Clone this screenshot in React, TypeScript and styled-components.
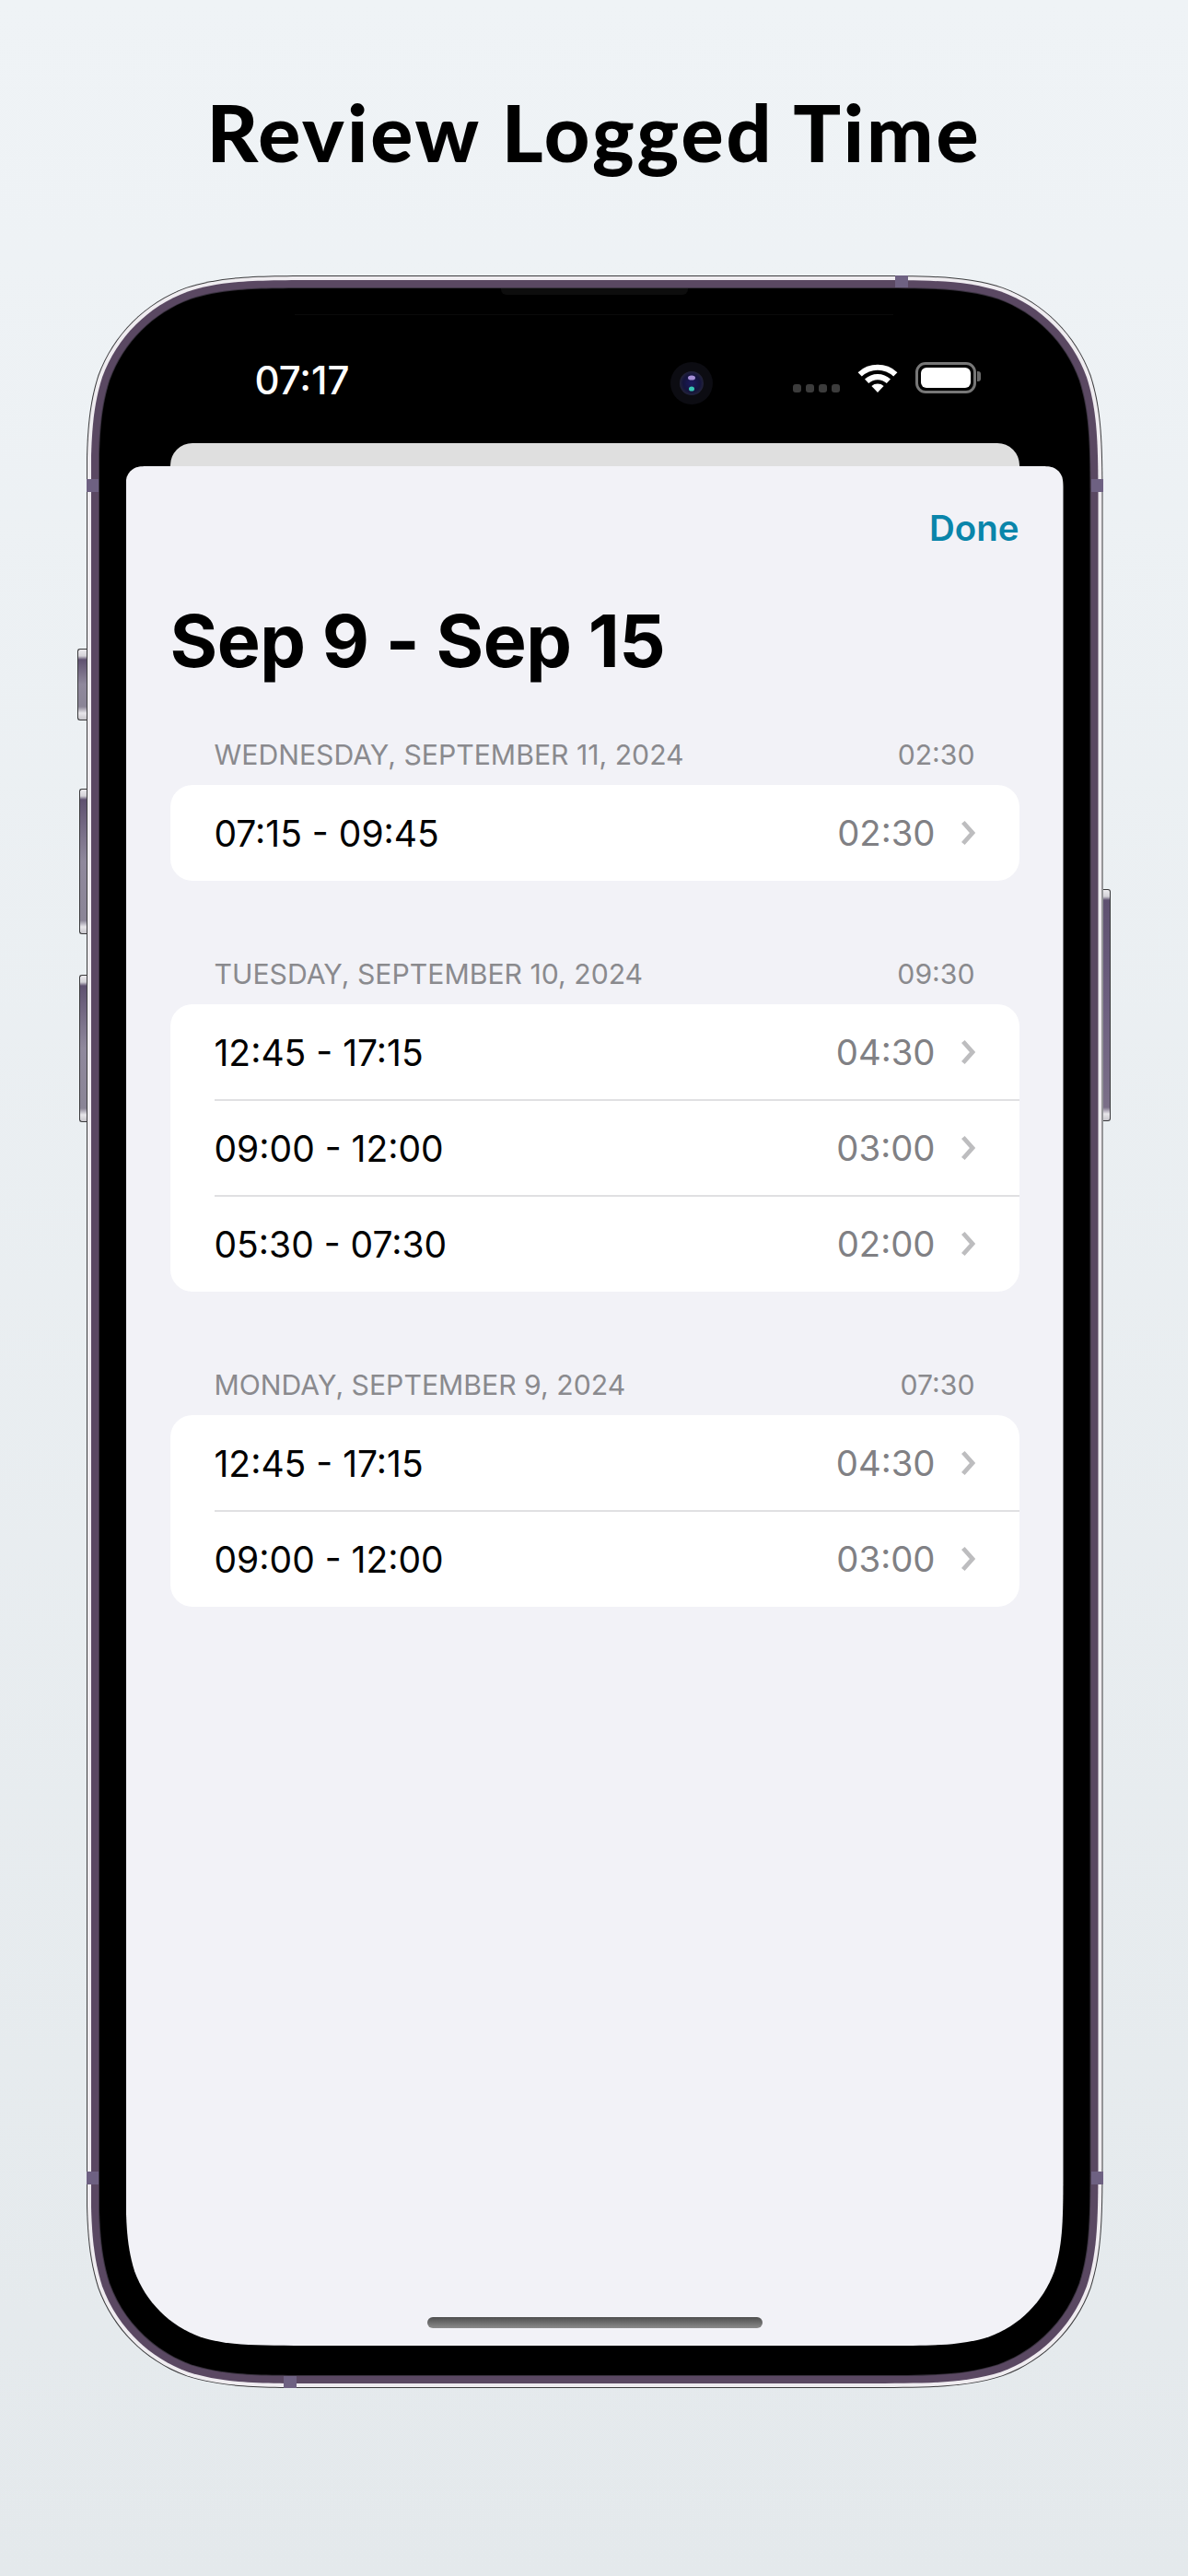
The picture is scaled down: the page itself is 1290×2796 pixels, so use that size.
import React from 'react';
import styled, { createGlobalStyle } from 'styled-components';

const Global = createGlobalStyle`
  html, body { margin: 0; padding: 0; }
  body { font-family: Inter, "Liberation Sans", sans-serif; }
  * { box-sizing: border-box; }
`;

// iOS-style continuous corner outline, used as a CSS clip-path for the phone's nested layers.
const CURVE: [number, number][][] = [
  [[1.08849, 0], [0.86841, 0], [0.63149, 0.07491]],
  [[0.37282, 0.16906], [0.16906, 0.37282], [0.07491, 0.63149]],
  [[0, 0.86841], [0, 1.08849], [0, 1.52866]],
];

function continuous(w: number, h: number, top: number, bottom: number): string {
  const n = (v: number) => v.toFixed(2);
  const tr = (x: number, y: number) => `${n(w - x * top)} ${n(y * top)}`;
  const br = (x: number, y: number) => `${n(w - y * bottom)} ${n(h - x * bottom)}`;
  const bl = (x: number, y: number) => `${n(x * bottom)} ${n(h - y * bottom)}`;
  const tl = (x: number, y: number) => `${n(y * top)} ${n(x * top)}`;
  const seg = (at: (x: number, y: number) => string) =>
    CURVE.map(c => `C ${c.map(([x, y]) => at(x, y)).join(' ')}`).join(' ');
  return `path("M ${n(1.52866 * top)} 0 L ${tr(1.52866, 0)} ${seg(tr)} L ${br(1.52866, 0)} ${seg(br)} L ${bl(1.52866, 0)} ${seg(bl)} L ${tl(1.52866, 0)} ${seg(tl)} Z")`;
}

const Page = styled.div`
  width: 1290px;
  height: 2796px;
  overflow: hidden;
  background: linear-gradient(180deg, #eff3f6 0%, #e4e9ec 100%);
  display: flex;
  flex-direction: column;
  align-items: center;
`;

const Title = styled.h1`
  margin: 0;
  height: 299px;
  flex: none;
  padding-top: 98px;
  font-family: Lato, "Liberation Sans", sans-serif;
  font-weight: 900;
  font-size: 86px;
  line-height: 90px;
  letter-spacing: 2.95px;
  color: #000;
  white-space: nowrap;
`;

const Phone = styled.div`
  position: relative;
  width: 1104px;
  height: 2293px;
  flex: none;
  margin-left: 1px;
`;

const OuterLine = styled.div`
  height: 100%;
  padding: 1px;
  background: #3c3c3e;
  clip-path: ${continuous(1104, 2293, 172, 172)};
`;

const WhiteBand = styled.div`
  height: 100%;
  padding: 4px;
  background: #efecf0;
  clip-path: ${continuous(1102, 2291, 171, 171)};
`;

const Rim = styled.div`
  height: 100%;
  padding: 8px;
  background: #5a4862;
  clip-path: ${continuous(1094, 2283, 167, 167)};
`;

const InnerEdge = styled.div`
  height: 100%;
  padding: 1px;
  background: #39323f;
  clip-path: ${continuous(1078, 2267, 159, 159)};
`;

const Bezel = styled.div`
  position: relative;
  height: 100%;
  padding: 0 29px 32px;
  background: #000;
  clip-path: ${continuous(1076, 2265, 158, 158)};
  display: flex;
  flex-direction: column;
`;

const SideButton = styled.div<{ $side: 'left' | 'right'; $top: number; $h: number; $w: number }>`
  position: absolute;
  top: ${p => p.$top}px;
  height: ${p => p.$h}px;
  width: ${p => p.$w}px;
  ${p => (p.$side === 'left' ? `right: 100%;` : `left: 100%;`)}
  border: 1px solid #3a3a3c;
  ${p => (p.$side === 'left' ? `border-right: none; border-radius: 3px 0 0 3px;` : `border-left: none; border-radius: 0 3px 3px 0;`)}
  background: linear-gradient(
    180deg,
    #eceaee 0,
    #d4d2d8 7px,
    #5f5170 11px,
    ${p => (p.$side === 'left' ? '#8f889c' : '#6d5f80')} 50%,
    ${p => (p.$side === 'left' ? '#8a8496' : '#7b6f88')} calc(100% - 14px),
    #e8e6ea calc(100% - 7px),
    #c8c6cc 100%
  );
`;

const Band = styled.div<{ $top?: number; $bottom?: number; $left?: number; $right?: number; $horizontal?: boolean }>`
  position: absolute;
  z-index: 2;
  background: #6e6182;
  ${p => (p.$top !== undefined ? `top: ${p.$top}px;` : '')}
  ${p => (p.$bottom !== undefined ? `bottom: ${p.$bottom}px;` : '')}
  ${p => (p.$left !== undefined ? `left: ${p.$left}px;` : '')}
  ${p => (p.$right !== undefined ? `right: ${p.$right}px;` : '')}
  width: ${p => (p.$horizontal ? 14 : 13)}px;
  height: ${p => (p.$horizontal ? 13 : 14)}px;
`;

const Speaker = styled.div`
  position: absolute;
  top: 0;
  left: 50%;
  width: 203px;
  height: 7px;
  margin-left: -102px;
  border-radius: 0 0 6px 6px;
  background: #0d0d0d;
`;

const GlassLine = styled.div`
  position: absolute;
  top: 28px;
  left: 212px;
  width: 650px;
  height: 1px;
  background: #0a0a0a;
`;

const StatusBar = styled.div`
  height: 168px;
  flex: none;
  padding: 81px 0 0 140px;
  display: flex;
  align-items: flex-start;
`;

const Clock = styled.div`
  width: 450px;
  margin-top: -3px;
  font-size: 42px;
  font-weight: 500;
  line-height: 44px;
  color: #fff;
`;

const Camera = styled.svg`
  width: 48px;
  height: 48px;
  flex: none;
  margin-top: -2px;
`;

const Cellular = styled.div`
  margin: 23px 0 0 86px;
  width: 51px;
  display: flex;
  justify-content: space-between;
`;

const Dot = styled.span`
  width: 9px;
  height: 9px;
  border-radius: 3px;
  background: #3c3c3c;
`;

const Wifi = styled.svg`
  width: 44px;
  height: 33px;
  flex: none;
  margin: -1px 0 0 19px;
`;

const Battery = styled.div`
  position: relative;
  width: 66px;
  height: 34px;
  flex: none;
  margin: -1px 0 0 19px;
  padding: 3px;
  border: 3px solid #777;
  border-radius: 11px;

  &::before {
    content: '';
    display: block;
    height: 100%;
    border-radius: 6px;
    background: #fff;
  }

  &::after {
    content: '';
    position: absolute;
    left: calc(100% + 4px);
    top: 7px;
    width: 4px;
    height: 11px;
    border-radius: 0 3px 3px 0;
    background: #6a6a6a;
  }
`;

const BackCard = styled.div`
  height: 25px;
  flex: none;
  margin: 0 48px;
  border-radius: 24px 24px 0 0;
  background: #dfdfdf;
`;

const Sheet = styled.div`
  flex: 1;
  padding: 45px 48px 0;
  clip-path: ${continuous(1018, 2040, 18, 128)};
  background: #f2f2f7;
  display: flex;
  flex-direction: column;
  position: relative;
`;

const Done = styled.div`
  align-self: flex-end;
  font-size: 38.5px;
  font-weight: 600;
  line-height: 44px;
  color: #0a85aa;
`;

const SheetTitle = styled.h2`
  margin: 50px 0 0;
  font-size: 79px;
  font-weight: 700;
  line-height: 100px;
  color: #000;
  letter-spacing: -0.5px;
`;

const SectionStack = styled.div`
  margin-top: 54px;
  display: flex;
  flex-direction: column;
  gap: 81px;
`;

const SectionHeader = styled.div`
  height: 40px;
  margin-bottom: 13px;
  padding: 0 48px;
  display: flex;
  align-items: center;
  justify-content: space-between;
  font-size: 30.2px;
  color: #8a8a8e;
`;

const Card = styled.div`
  border-radius: 24px;
  background: #fff;
  overflow: hidden;
`;

const Row = styled.div`
  position: relative;
  height: 104px;
  padding: 0 48px;
  display: flex;
  align-items: center;
  font-size: 39px;
  color: #000;

  & + &::before {
    content: '';
    position: absolute;
    top: -1px;
    left: 48px;
    right: 0;
    height: 2px;
    background: #e0e0e2;
  }
`;

const Range = styled.span`
  flex: 1;
`;

const Duration = styled.span`
  font-size: 38.3px;
  color: #808084;
`;

const Chevron = styled.svg`
  width: 16px;
  height: 28px;
  flex: none;
  margin-left: 27px;
`;

const HomeBar = styled.div`
  position: absolute;
  left: 327px;
  bottom: 19px;
  width: 364px;
  height: 12px;
  border-radius: 6px;
  background: linear-gradient(180deg, #4e4e4e 0%, #8c8c8c 100%);
`;

type Entry = { range: string; duration: string };
type Section = { day: string; total: string; entries: Entry[] };

const sections: Section[] = [
  {
    day: 'WEDNESDAY, SEPTEMBER 11, 2024',
    total: '02:30',
    entries: [{ range: '07:15 - 09:45', duration: '02:30' }],
  },
  {
    day: 'TUESDAY, SEPTEMBER 10, 2024',
    total: '09:30',
    entries: [
      { range: '12:45 - 17:15', duration: '04:30' },
      { range: '09:00 - 12:00', duration: '03:00' },
      { range: '05:30 - 07:30', duration: '02:00' },
    ],
  },
  {
    day: 'MONDAY, SEPTEMBER 9, 2024',
    total: '07:30',
    entries: [
      { range: '12:45 - 17:15', duration: '04:30' },
      { range: '09:00 - 12:00', duration: '03:00' },
    ],
  },
];

export default function App() {
  return (
    <Page>
      <Global />
      <Title>Review Logged Time</Title>
      <Phone>
        <SideButton $side="left" $top={405} $h={78} $w={10} />
        <SideButton $side="left" $top={557} $h={158} $w={8} />
        <SideButton $side="left" $top={759} $h={160} $w={8} />
        <SideButton $side="right" $top={666} $h={252} $w={8} />
        <Band $top={221} $left={0} />
        <Band $top={221} $right={0} />
        <Band $bottom={221} $left={0} />
        <Band $bottom={221} $right={0} />
        <Band $top={0} $left={878} $horizontal />
        <Band $bottom={0} $left={214} $horizontal />
        <OuterLine>
          <WhiteBand>
            <Rim>
              <InnerEdge>
                <Bezel>
                  <Speaker />
                  <GlassLine />
                  <StatusBar>
                    <Clock>07:17</Clock>
                    <Camera viewBox="0 0 48 48">
                      <defs>
                        <radialGradient id="lens" cx="50%" cy="50%" r="50%">
                          <stop offset="0%" stopColor="#1c1a5e" />
                          <stop offset="70%" stopColor="#14143c" />
                          <stop offset="100%" stopColor="#23233a" />
                        </radialGradient>
                      </defs>
                      <circle cx="24" cy="24" r="23" fill="#0c0c12" />
                      <circle cx="24" cy="24" r="13" fill="url(#lens)" />
                      <ellipse cx="24" cy="18" rx="4" ry="2.6" fill="#a58fd6" />
                      <ellipse cx="24" cy="30" rx="3" ry="2.6" fill="#38c6b4" />
                    </Camera>
                    <Cellular>
                      <Dot />
                      <Dot />
                      <Dot />
                      <Dot />
                    </Cellular>
                    <Wifi viewBox="0 0 44 33">
                      <path d="M0.6 11.2 A31 31 0 0 1 43.4 11.2 L39.2 15.6 A25 25 0 0 0 4.8 15.6 Z" fill="#fff" />
                      <path d="M8 18.6 A20.5 20.5 0 0 1 36 18.6 L31.8 23 A14.5 14.5 0 0 0 12.2 23 Z" fill="#fff" />
                      <path d="M15.4 26 A10 10 0 0 1 28.6 26 L22 33 Z" fill="#fff" />
                    </Wifi>
                    <Battery />
                  </StatusBar>
                  <BackCard />
                  <Sheet>
                    <Done>Done</Done>
                    <SheetTitle>Sep 9 - Sep 15</SheetTitle>
                    <SectionStack>
                      {sections.map(s => (
                        <div key={s.day}>
                          <SectionHeader>
                            <span>{s.day}</span>
                            <span>{s.total}</span>
                          </SectionHeader>
                          <Card>
                            {s.entries.map(e => (
                              <Row key={e.range}>
                                <Range>{e.range}</Range>
                                <Duration>{e.duration}</Duration>
                                <Chevron viewBox="0 0 16 28">
                                  <path d="M2.8 2.5 L13 14 L2.8 25.5" fill="none" stroke="#bdbdbf" strokeWidth="4.8" />
                                </Chevron>
                              </Row>
                            ))}
                          </Card>
                        </div>
                      ))}
                    </SectionStack>
                    <HomeBar />
                  </Sheet>
                </Bezel>
              </InnerEdge>
            </Rim>
          </WhiteBand>
        </OuterLine>
      </Phone>
    </Page>
  );
}
